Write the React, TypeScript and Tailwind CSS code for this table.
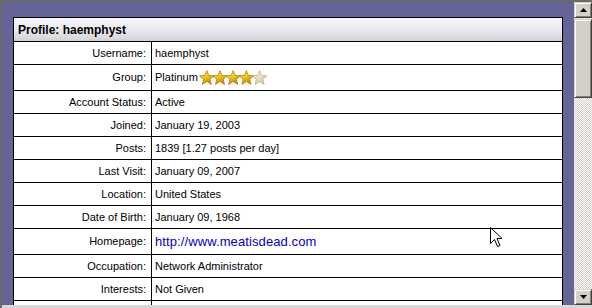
import React from 'react';

type Row = { label: string; value: React.ReactNode; tall?: boolean };

function Stars() {
  const star = 'M7.8 0.6 L9.8 5.5 L15 5.8 L11 9.2 L12.3 14.4 L7.8 11.5 L3.3 14.4 L4.6 9.2 L0.6 5.8 L5.8 5.5 Z';
  return (
    <svg width="70" height="17" viewBox="0 0 70 17" className="ml-[1px]">
      <defs>
        <linearGradient id="gold" x1="0" y1="0" x2="0.4" y2="1">
          <stop offset="0" stopColor="#fff7a0" />
          <stop offset="0.45" stopColor="#f5d21c" />
          <stop offset="1" stopColor="#c98a06" />
        </linearGradient>
        <linearGradient id="pale" x1="0" y1="0" x2="0.4" y2="1">
          <stop offset="0" stopColor="#fbf7ea" />
          <stop offset="1" stopColor="#d9cba8" />
        </linearGradient>
      </defs>
      {[0, 1, 2, 3, 4].map((i) => (
        <path
          key={i}
          d={star}
          transform={`translate(${i * 13.2}, 1)`}
          fill={i < 4 ? 'url(#gold)' : 'url(#pale)'}
          stroke={i < 4 ? '#b07a10' : '#bfae8a'}
          strokeWidth="0.8"
        />
      ))}
    </svg>
  );
}

const rows: Row[] = [
  { label: 'Username:', value: 'haemphyst' },
  {
    label: 'Group:',
    tall: true,
    value: (
      <span className="flex items-center">
        Platinum
        <Stars />
      </span>
    ),
  },
  { label: 'Account Status:', value: 'Active' },
  { label: 'Joined:', value: 'January 19, 2003' },
  { label: 'Posts:', value: '1839 [1.27 posts per day]' },
  { label: 'Last Visit:', value: 'January 09, 2007' },
  { label: 'Location:', value: 'United States' },
  { label: 'Date of Birth:', value: 'January 09, 1968' },
  {
    label: 'Homepage:',
    tall: true,
    value: <span className="text-[13px] tracking-[0.1px] text-[#0000cc]">http://www.meatisdead.com</span>,
  },
  { label: 'Occupation:', value: 'Network Administrator' },
  { label: 'Interests:', value: 'Not Given' },
  { label: '', value: '' },
];

const bevel =
  'border border-t-[#d4d0c8] border-l-[#d4d0c8] border-r-[#404040] border-b-[#404040] bg-[#d4d0c8] shadow-[inset_1px_1px_0_#ffffff,inset_-1px_-1px_0_#808080]';

function Scrollbar() {
  return (
    <div className="flex w-[18px] shrink-0 flex-col bg-[repeating-conic-gradient(#d4d0c8_0_25%,#ffffff_0_50%)] bg-[length:2px_2px]">
      <div className={`${bevel} flex h-[16px] items-center justify-center`}>
        <svg width="7" height="4" viewBox="0 0 7 4">
          <path d="M3.5 0 L7 4 L0 4 Z" fill="#000" />
        </svg>
      </div>
      <div className={`${bevel} mt-[1px] h-[79px]`} />
      <div className="flex-1" />
      <div className={`${bevel} flex h-[16px] items-center justify-center`}>
        <svg width="7" height="4" viewBox="0 0 7 4">
          <path d="M0 0 L7 0 L3.5 4 Z" fill="#000" />
        </svg>
      </div>
    </div>
  );
}

export default function App() {
  return (
    <div className="relative flex h-[308px] w-[592px] flex-col overflow-hidden border-t-2 border-l-2 border-[#6a6a6a] bg-[#d8d8d8] font-['Liberation_Sans',Arial,sans-serif] text-[11px] text-black">
      <div className="flex h-[303px] shrink-0">
        <div className="flex-1 overflow-hidden bg-[#646499] pt-[15px] pl-[11px] pr-[11px]">
          <div className="w-[550px] border-x border-t border-black bg-white">
            <div className="flex h-[24px] items-center border-b border-black bg-[linear-gradient(#f7f6fb,#e9e8ee_55%,#d2d1d6)] pl-[4px] text-[12px] font-bold">
              Profile: haemphyst
            </div>
            {rows.map((row, i) => (
              <div key={i} className={`flex border-b border-black ${row.tall ? 'h-[26px]' : 'h-[23px]'}`}>
                <div className="flex w-[138px] shrink-0 items-center justify-end border-r border-black pr-[5px]">{row.label}</div>
                <div className="flex items-center pl-[3px]">{row.value}</div>
              </div>
            ))}
          </div>
        </div>
        <Scrollbar />
      </div>

      <svg className="absolute left-[488px] top-[225px]" width="13" height="22" viewBox="0 0 13 22">
        <path d="M0.5 0.5 L0.5 16.5 L4.5 12.5 L7.5 19.5 L10 18.5 L7 11.5 L12 11.5 Z" fill="#fff" stroke="#000" strokeWidth="1" />
      </svg>
    </div>
  );
}
